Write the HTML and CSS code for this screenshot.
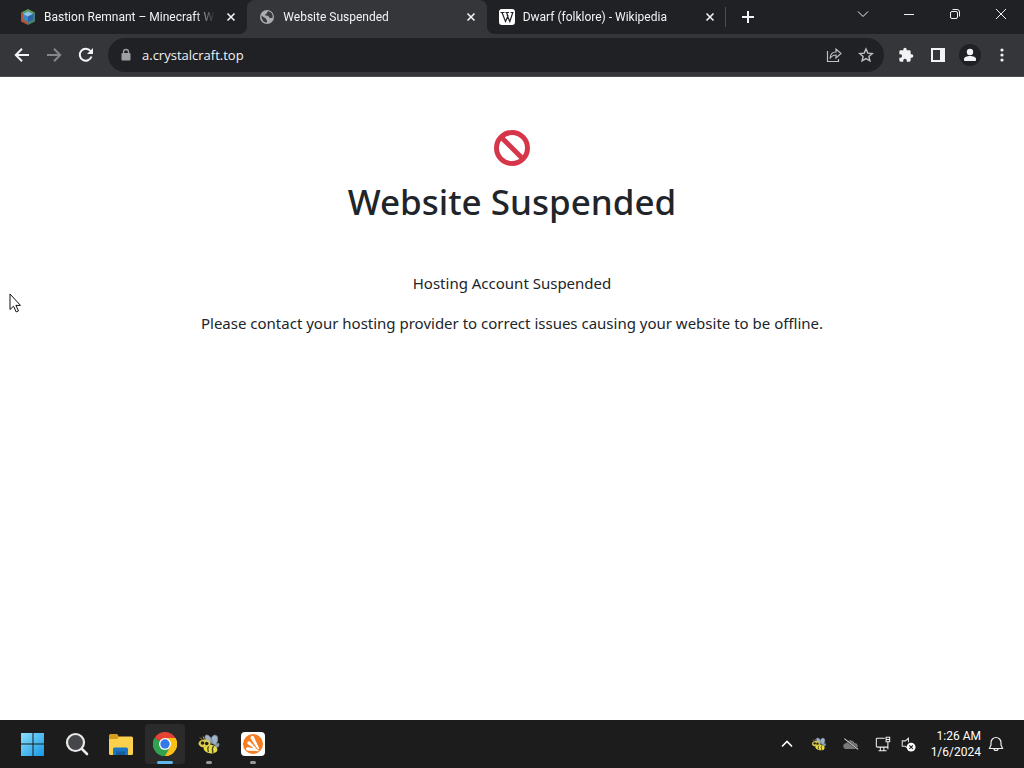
FILE: index.html
```html
<!DOCTYPE html>
<html lang="en">
<head>
<meta charset="utf-8">
<meta name="viewport" content="width=device-width, initial-scale=1">
<title>Website Suspended</title>
<link rel="stylesheet" href="styles.css">
</head>
<body>
<div class="desktop">
  <header class="browser">
    <div class="tab-strip">
      <div class="tabs">
        <div class="tab">
          <svg class="favicon" viewBox="0 0 16 16"><path d="M8 0l7 3.500-7 4-7-4z" fill="#5f9a52"/><path d="M1 3.500l7 4V16l-7-3.500z" fill="#b2563a"/><path d="M15 3.500l-7 4V16l7-3.500z" fill="#4a7f72"/><path d="M8 2.500l5 2.500v5.500L8 13l-5-2.500V5z" fill="#3f87c5"/><path d="M8 2.500l5 2.500-5 2.500L3 5z" fill="#8fc4e8"/><path d="M8 7.500l5-2.500v5.500L8 13z" fill="#2864a6"/></svg>
          <span class="tab-title">Bastion Remnant – Minecraft Wi</span>
          <button class="tab-close" aria-label="Close tab"><svg viewBox="0 0 16 16"><path d="M4.500 4.500l7 7m0-7l-7 7"/></svg></button>
        </div>
        <div class="tab active">
          <svg class="favicon" viewBox="0 0 16 16"><circle cx="8" cy="8" r="7" fill="#a9acb0"/><path d="M2.300 6.500l3.200 2.200q1.500.2 1.700 1.800l.8 1v2.200Q2.500 13 2.300 6.500z" fill="#393a3e"/><path d="M9.500 2.300Q7.500 3 8 4.200q-2 .3-1.800 2.300 2.500-.3 3.600 1 .2 1.500 1.700 1.500h2Q14.500 4 9.500 2.300z" fill="#393a3e"/></svg>
          <span class="tab-title">Website Suspended</span>
          <button class="tab-close" aria-label="Close tab"><svg viewBox="0 0 16 16"><path d="M4.500 4.500l7 7m0-7l-7 7"/></svg></button>
        </div>
        <div class="tab last">
          <svg class="favicon" viewBox="0 0 16 16"><rect width="16" height="16" rx="3" fill="#fff"/><path d="M1.500 3.500h4M6.500 3.500h3.500M11.500 3.500h3M3 3.500l3.500 9L9 7 7.500 3.500M8 6l2.800 6.500 3-9" fill="none" stroke="#202124" stroke-width="1.200"/></svg>
          <span class="tab-title">Dwarf (folklore) - Wikipedia</span>
          <button class="tab-close" aria-label="Close tab"><svg viewBox="0 0 16 16"><path d="M4.500 4.500l7 7m0-7l-7 7"/></svg></button>
        </div>
      </div>
      <button class="new-tab" aria-label="New tab"><svg viewBox="0 0 16 16"><path d="M8 2v12M2 8h12"/></svg></button>
      <div class="window-controls">
        <button aria-label="Search tabs"><svg viewBox="0 0 12 12"><path d="M1 3.500l5 5 5-5"/></svg></button>
        <button aria-label="Minimize"><svg viewBox="0 0 12 12"><path d="M1 6.500h10"/></svg></button>
        <button aria-label="Restore"><svg viewBox="0 0 12 12"><rect x="1.500" y="3.500" width="7" height="7" rx="1.500"/><path d="M3.500 1.500H8a2.500 2.500 0 0 1 2.500 2.500v4.500"/></svg></button>
        <button aria-label="Close"><svg viewBox="0 0 12 12"><path d="M1 1l10 10M11 1L1 11"/></svg></button>
      </div>
    </div>
    <div class="toolbar">
      <div class="button-group">
        <button class="icon-button" aria-label="Back"><svg viewBox="0 0 16 16"><path d="M15 8H2M8 1.800L1.800 8 8 14.200" fill="none" stroke="currentColor" stroke-width="2"/></svg></button>
        <button class="icon-button muted" aria-label="Forward"><svg viewBox="0 0 16 16"><path d="M1 8h13M8 1.800L14.200 8 8 14.200" fill="none" stroke="currentColor" stroke-width="2"/></svg></button>
        <button class="icon-button" aria-label="Reload"><svg viewBox="0 0 16 16"><path d="M13.500 9.500A6 6 0 1 1 12.500 4" fill="none" stroke="currentColor" stroke-width="2"/><path d="M15 1v6H9z" fill="currentColor"/></svg></button>
      </div>
      <div class="address-bar">
        <svg class="lock" viewBox="0 0 12 14"><rect x="1.500" y="5" width="9" height="7.500" rx="1" fill="currentColor"/><path d="M3.500 5V4a2.500 2.500 0 0 1 5 0v1" fill="none" stroke="currentColor" stroke-width="1.300"/></svg>
        <input class="address" type="text" aria-label="Address" value="a.crystalcraft.top">
        <button class="icon-button soft" aria-label="Share"><svg viewBox="0 0 16 16"><path d="M1.500 4v10.500h11V12M4 11.500C4.300 7.500 6.500 5 10 5V2l5 4.500-5 4.500V8C7.500 8 5.500 9 4 11.500z" fill="none" stroke="currentColor" stroke-width="1.200"/></svg></button>
        <button class="icon-button soft" aria-label="Bookmark"><svg viewBox="0 0 16 16"><path d="M8 2l1.800 4.100 4.500.4-3.400 3 1 4.400L8 11.600l-3.900 2.300 1-4.400-3.400-3 4.500-.4z" fill="none" stroke="currentColor" stroke-width="1.400"/></svg></button>
      </div>
      <div class="button-group">
        <button class="icon-button" aria-label="Extensions"><svg viewBox="0 0 24 24"><path fill="currentColor" d="M20.500 11H19V7c0-1.100-.9-2-2-2h-4V3.500a2.500 2.500 0 0 0-5 0V5H4c-1.100 0-2 .9-2 2v3.800h1.500a2.700 2.700 0 0 1 0 5.400H2V20c0 1.100.9 2 2 2h3.800v-1.500a2.700 2.700 0 0 1 5.400 0V22H17c1.100 0 2-.9 2-2v-4h1.500a2.500 2.500 0 0 0 0-5z"/></svg></button>
        <button class="icon-button" aria-label="Side panel"><svg viewBox="0 0 16 16"><path fill="currentColor" fill-rule="evenodd" d="M1 1h14v14H1zM3 3v10h7V3z"/></svg></button>
        <button class="icon-button profile" aria-label="Profile"><svg viewBox="0 0 16 16"><circle cx="8" cy="5" r="3.200" fill="currentColor"/><path d="M2 14v-2c0-2 3-3 6-3s6 1 6 3v2z" fill="currentColor"/></svg></button>
        <button class="icon-button" aria-label="Menu"><svg viewBox="0 0 16 16"><g fill="currentColor"><circle cx="8" cy="3" r="1.600"/><circle cx="8" cy="8" r="1.600"/><circle cx="8" cy="13" r="1.600"/></g></svg></button>
      </div>
    </div>
  </header>

  <main class="page">
    <svg class="ban" viewBox="0 0 36 36"><circle cx="18" cy="18" r="15.500"/><path d="M7.500 7.500l21 21"/></svg>
    <h1 class="headline">Website Suspended</h1>
    <p class="message">Hosting Account Suspended</p>
    <p class="message">Please contact your hosting provider to correct issues causing your website to be offline.</p>
    <svg class="cursor" viewBox="0 0 12 20"><path d="M1 1v15.500l3.500-3.300 2.700 5.700 2.300-1-2.600-5.500h4.600z" fill="#fff" stroke="#111"/></svg>
  </main>

  <footer class="taskbar">
    <nav class="apps" aria-label="Taskbar">
      <button class="app" aria-label="Start"><svg viewBox="0 0 24 24"><defs><linearGradient id="win" x2="1" y2="1"><stop stop-color="#8be0fb"/><stop offset="1" stop-color="#1597e5"/></linearGradient></defs><path fill="url(#win)" d="M0 1h11.500v10.500H0zM12.500 1H23v10.500H12.500zM0 12.500h11.500V24H0zM12.500 12.500H23V24H12.500z"/></svg></button>
      <button class="app" aria-label="Search"><svg viewBox="0 0 24 24"><circle cx="10.500" cy="10.500" r="8.500" fill="#45464a" stroke="#e9e9e9" stroke-width="2.200"/><path d="M17 17l5 5" stroke="#e9e9e9" stroke-width="2.600" stroke-linecap="round"/></svg></button>
      <button class="app" aria-label="File Explorer"><svg viewBox="0 0 24 24"><path d="M0 3.500Q0 2 1.500 2H8l2.500 3H22v6H0z" fill="#d79b20"/><path d="M0 7h8l2.500-2.500H22.500Q24 4.500 24 6v15.500Q24 23 22.500 23h-21Q0 23 0 21.500z" fill="#fbd04d"/><path d="M4 23v-6q0-1.500 1.500-1.500h12Q19 15.500 19 17v6z" fill="#1976c5"/><path d="M7 19.500h9V23H7z" fill="#155d9d"/></svg></button>
      <button class="app current" aria-label="Chrome"><svg viewBox="0 0 24 24"><path d="M12 12L1.600 6A12 12 0 0 1 22.400 6z" fill="#e54335"/><path d="M12 12l10.400-6A12 12 0 0 1 12 24z" fill="#fbc116"/><path d="M12 12v12A12 12 0 0 1 1.600 6z" fill="#31a350"/><path d="M12 6h10.400A12 12 0 0 1 12 24l5.200-9z" fill="#fbc116"/><path d="M6.800 15L1.600 6A12 12 0 0 0 12 24l5.200-9z" fill="#31a350"/><circle cx="12" cy="12" r="6" fill="#fff"/><circle cx="12" cy="12" r="4.700" fill="#3479e8"/></svg></button>
      <button class="app open" aria-label="Bee"><svg viewBox="0 0 24 24"><use href="#bee"/></svg></button>
      <button class="app open" aria-label="Avast"><svg viewBox="0 0 24 24"><rect width="24" height="24" rx="4" fill="#fff"/><circle cx="12" cy="12" r="10" fill="#f57c1f"/><path d="M10.200 4.300q1.600-1.200 2.800.6l5.500 12q-1.500.5-2.500-.7L10 7q-1-1.600.2-2.700zM6.800 9.700q1.300-1 2.500.2l6 6.300q-1.300.8-2.600 0L7 12.200q-1.300-1.300-.2-2.500zM5 16.700q.2-1.400 1.800-1.400l9 1.700 3 2.200-5-.2-7-.3Q4.800 18.300 5 16.700z" fill="#fff"/></svg></button>
    </nav>
    <div class="tray">
      <button class="tray-icon" aria-label="Show hidden icons"><svg viewBox="0 0 16 16"><path d="M3 10.500l5-5 5 5" fill="none" stroke="#fff" stroke-width="1.600"/></svg></button>
      <button class="tray-icon" aria-label="Bee"><svg viewBox="0 0 24 24">
        <g id="bee"><path d="M10 10Q6.500 4.500 9 3q4-1 7 8zM14 11q-.5-7.500 4-8Q23 4 19 13z" fill="#a3b3c6" stroke="#75869a" stroke-width=".8"/><path d="M17 12l5-1q1.500 4-3 5z" fill="#8495a8"/><ellipse cx="13.500" cy="17" rx="7" ry="4.300" transform="rotate(10 13.500 17)" fill="#e6dc48"/><path d="M12 13.500q-2 2.500-.5 6.500M16.500 14q-2 3-.5 7" fill="none" stroke="#4a4518" stroke-width="1.300"/><ellipse cx="7.500" cy="11.500" rx="6" ry="4" fill="#dccd4a"/><circle cx="5.500" cy="11" r="1.800" fill="#222"/><circle cx="9.700" cy="11.500" r="1.800" fill="#222"/><path d="M5 7.500L3 5.500M7.500 7.500L6 4.500" stroke="#b4ab42"/></g></svg></button>
      <button class="tray-icon" aria-label="OneDrive"><svg viewBox="0 0 18 18"><path d="M3.500 14.500a3.200 3.200 0 0 1 .2-6.400A5 5 0 0 1 13 7.800a3.400 3.400 0 0 1 1 6.700z" fill="#77797b"/><path d="M1 3l16 12" stroke="#1c1c1c" stroke-width="2"/><path d="M1.500 3L17 15" stroke="#d5d5d5" stroke-width="1.200"/></svg></button>
      <button class="tray-icon" aria-label="Network"><svg viewBox="0 0 18 18"><path d="M11 2.500H2.500Q1.500 2.500 1.500 3.500v8q0 1 1 1H14M4 16.500h9M6 12.500v4M10 12.500v4M12.500 1.500h4v5h-4zM14.500 6.500v8.500M12.500 4h4" fill="none" stroke="#eee" stroke-width="1.200"/></svg></button>
      <button class="tray-icon volume" aria-label="Volume muted"><svg viewBox="0 0 18 18"><path d="M9.500 7V2.500L6 5.500H2.500v6H6L8 13" fill="none" stroke="#ddd" stroke-width="1.200"/><circle cx="12.500" cy="12.500" r="5" fill="#fff"/><path d="M10.500 10.500l4 4m0-4l-4 4" stroke="#1c1c1c" stroke-width="1.200"/></svg></button>
      <div class="clock"><time>1:26 AM</time><time>1/6/2024</time></div>
      <button class="tray-icon bell" aria-label="Notifications"><svg viewBox="0 0 16 16"><path d="M3 9V6.500a5 5 0 0 1 10 0V9l1.500 3.500h-13zM6 12.500a2 2 0 0 0 4 0" fill="none" stroke="#eee" stroke-width="1.200"/></svg></button>
    </div>
  </footer>
</div>
</body>
</html>
```

FILE: styles.css
```css
* {
  box-sizing: border-box;
}

body {
  margin: 0;
  font-family: "Open Sans", "Noto Sans", sans-serif;
  color: #212529;
  background: #fff;
}

button {
  display: flex;
  align-items: center;
  justify-content: center;
  padding: 0;
  border: 0;
  background: none;
  color: inherit;
  font: inherit;
}

svg {
  display: block;
  flex: none;
}

.desktop {
  display: flex;
  flex-direction: column;
  min-height: 100vh;
}

/* Browser chrome */
.browser {
  background: #202124;
  color: #f1f3f4;
}

.tab-strip {
  display: flex;
  height: 34px;
  padding-left: 8px;
}

.tabs {
  display: flex;
  flex: 0 1 718px;
  min-width: 0;
}

.tab {
  position: relative;
  display: flex;
  flex: 1 1 0;
  align-items: center;
  min-width: 0;
  padding: 0 8px 0 12px;
  font-family: Roboto, "Open Sans", sans-serif;
  font-size: 12px;
}

.tab.active {
  background: #35363a;
  border-radius: 8px 8px 0 0;
}

.tab.active::before,
.tab.active::after {
  content: "";
  position: absolute;
  bottom: 0;
  width: 8px;
  height: 8px;
}

.tab.active::before {
  right: 100%;
  background: radial-gradient(circle at 0 0, transparent 8px, #35363a 8px);
}

.tab.active::after {
  left: 100%;
  background: radial-gradient(circle at 100% 0, transparent 8px, #35363a 8px);
}

.tab.last::after {
  content: "";
  position: absolute;
  right: 0;
  top: 7px;
  width: 1px;
  height: 20px;
  background: #4b4d51;
}

.favicon {
  width: 16px;
  height: 16px;
}

.tab-title {
  flex: 1;
  min-width: 0;
  margin: 0 8px;
  overflow: hidden;
  white-space: nowrap;
  mask-image: linear-gradient(to right, #000 calc(100% - 20px), transparent);
}

.tab-close {
  width: 16px;
  height: 16px;
}

.tab-close svg {
  width: 16px;
  fill: none;
  stroke: currentColor;
  stroke-width: 1.600;
}

.new-tab {
  width: 28px;
  margin-left: 8px;
}

.new-tab svg {
  width: 16px;
  stroke: currentColor;
  stroke-width: 2;
}

.window-controls {
  display: flex;
  height: 28px;
  margin-left: auto;
}

.window-controls button {
  width: 46px;
}

.window-controls svg {
  width: 12px;
  fill: none;
  stroke: currentColor;
}

.toolbar {
  display: flex;
  align-items: center;
  gap: 8px;
  height: 43px;
  padding: 0 8px;
  background: #35363a;
  border-bottom: 1px solid #4c4d50;
}

.button-group {
  display: flex;
  gap: 4px;
}

.icon-button {
  width: 28px;
  height: 28px;
  border-radius: 50%;
}

.icon-button svg {
  width: 16px;
}

.muted {
  color: #85868a;
}

.soft {
  color: #bdc1c6;
}

.profile svg {
  width: 22px;
  height: 22px;
  padding: 3px;
  border-radius: 50%;
  background: #202124;
}

.address-bar {
  display: flex;
  flex: 1;
  align-items: center;
  gap: 4px;
  min-width: 0;
  height: 34px;
  padding: 0 4px 0 12px;
  border-radius: 17px;
  background: #202124;
}

.lock {
  width: 12px;
  color: #9aa0a6;
}

.address {
  flex: 1;
  min-width: 0;
  padding: 0 6px;
  border: 0;
  outline: 0;
  background: none;
  color: inherit;
  font: 13px "Open Sans", "Noto Sans", sans-serif;
}

/* Web page */
.page {
  position: relative;
  display: flex;
  flex: 1;
  flex-direction: column;
  align-items: center;
  padding: 53px 16px 16px;
  font-family: "Noto Sans", "Open Sans", sans-serif;
  text-align: center;
}

.ban {
  width: 36px;
  fill: none;
  stroke: #d63649;
  stroke-width: 5;
}

.headline {
  margin: 12px 0 45px;
  font-size: 35px;
  font-weight: 500;
  line-height: 48px;
}

.message {
  margin: 0 0 16px;
  font-size: 15px;
  line-height: 24px;
}

.cursor {
  position: absolute;
  left: 9px;
  top: 216px;
  width: 12px;
}

/* Taskbar */
.taskbar {
  display: flex;
  align-items: center;
  justify-content: space-between;
  height: 48px;
  padding: 0 20px 0 13px;
  background: #1c1c1c;
  color: #fff;
}

.apps {
  display: flex;
  gap: 4px;
}

.app {
  position: relative;
  width: 40px;
  height: 40px;
  border-radius: 4px;
}

.app svg {
  width: 24px;
}

.app.current {
  background: #2b2b2b;
}

.app.current::after,
.app.open::after {
  content: "";
  position: absolute;
  bottom: 0;
  width: 6px;
  height: 3px;
  border-radius: 2px;
  background: #999;
}

.app.current::after {
  width: 16px;
  background: #60b7e8;
}

.tray {
  display: flex;
  align-items: center;
}

.tray-icon {
  width: 32px;
  height: 32px;
}

.tray-icon svg {
  width: 16px;
}

.tray-icon.volume {
  width: 18px;
}

.tray-icon.bell {
  width: 16px;
}

.clock {
  display: flex;
  flex-direction: column;
  align-items: flex-end;
  padding: 0 7px 0 14px;
  font-family: Roboto, "Open Sans", sans-serif;
  font-size: 12px;
  line-height: 16px;
}
```
